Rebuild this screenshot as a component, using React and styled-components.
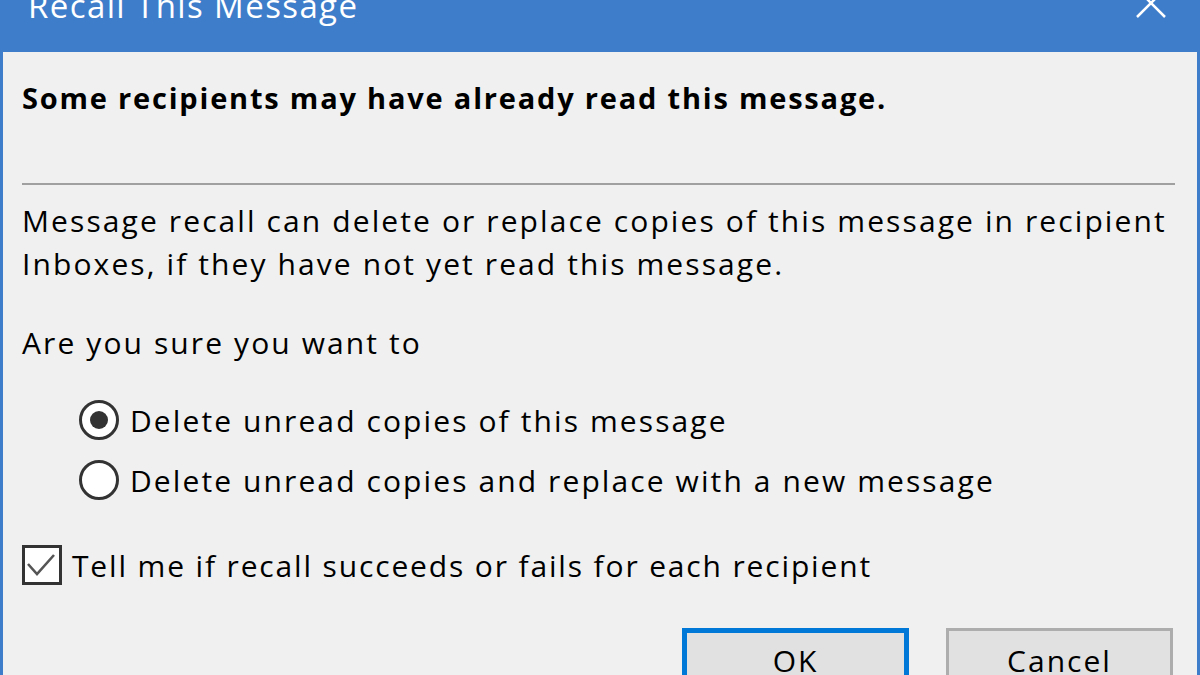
import React from 'react';
import styled, { createGlobalStyle } from 'styled-components';

const GlobalStyle = createGlobalStyle`
  html, body {
    margin: 0;
    padding: 0;
    background: #3d7dca;
  }
  body {
    font-family: "Open Sans", "Noto Sans", sans-serif;
  }
`;

const Frame = styled.div`
  width: 1200px;
  height: 675px;
  overflow: hidden;
  display: flex;
  flex-direction: column;
  background: #3d7dca;
`;

const TitleBar = styled.div`
  height: 52px;
  flex: none;
  display: flex;
  align-items: flex-start;
  justify-content: space-between;
  padding: 0 34px 0 28px;
`;

const TitleText = styled.div`
  margin-top: -16px;
  font-size: 33px;
  line-height: 44px;
  letter-spacing: 1.4px;
  color: #ffffff;
`;

const CloseIcon = styled.svg`
  margin-top: -12px;
  width: 30px;
  height: 30px;
`;

const Body = styled.div`
  flex: 1;
  margin: 0 3px 0 3px;
  background: #f0f0f0;
  padding: 0 22px 0 19px;
  display: flex;
  flex-direction: column;
  color: #000;
  font-size: 30px;
  line-height: 43px;
  letter-spacing: 2.1px;
`;

const Warning = styled.div`
  margin-top: 24px;
  font-weight: 700;
  font-size: 29px;
  letter-spacing: 1.8px;
`;

const Separator = styled.hr`
  margin: 64px 0 14px;
  border: none;
  border-top: 2px solid #a0a0a0;
  height: 0;
`;

const Paragraph = styled.p`
  margin: ${p => p.$gap || 0}px 0 0;
`;

const OptionList = styled.div`
  display: flex;
  flex-direction: column;
  margin: 26px 0 0 57px;
`;

const OptionRow = styled.label`
  height: 60px;
  display: flex;
  align-items: center;
  gap: ${p => p.$spacing || 11}px;
  margin-top: ${p => p.$gap || 0}px;
  letter-spacing: ${p => (p.$tight ? '1.85px' : 'inherit')};
`;

const Radio = styled.span`
  width: 40px;
  height: 40px;
  box-sizing: border-box;
  border-radius: 50%;
  border: 3px solid #333;
  background: #fff;
  display: flex;
  align-items: center;
  justify-content: center;
  flex: none;

  &::after {
    content: '';
    width: 18px;
    height: 18px;
    border-radius: 50%;
    background: #333;
    display: ${p => (p.$checked ? 'block' : 'none')};
  }
`;

const CheckBox = styled.span`
  width: 40px;
  height: 40px;
  box-sizing: border-box;
  border: 3px solid #333;
  background: #fff;
  display: flex;
  flex: none;
`;

const ButtonRow = styled.div`
  display: flex;
  justify-content: flex-end;
  gap: 37px;
  margin-top: 33px;
  padding-right: 2px;
`;

const Button = styled.button`
  width: 227px;
  height: 64px;
  flex: none;
  box-sizing: border-box;
  background: #e1e1e1;
  border: ${p => (p.$default ? '5px solid #0078d7' : '3px solid #adadad')};
  font-family: inherit;
  font-size: 30px;
  letter-spacing: 2px;
  color: #000;
  padding: 0;
`;

export default function App() {
  return (
    <Frame>
      <GlobalStyle />
      <TitleBar>
        <TitleText>Recall This Message</TitleText>
        <CloseIcon viewBox="0 0 30 30">
          <path d="M1 1 L29 29 M29 1 L1 29" stroke="#fff" strokeWidth="2.5" fill="none" />
        </CloseIcon>
      </TitleBar>
      <Body>
        <Warning>Some recipients may have already read this message.</Warning>
        <Separator />
        <Paragraph>
          Message recall can delete or replace copies of this message in recipient
          <br />
          Inboxes, if they have not yet read this message.
        </Paragraph>
        <Paragraph $gap={36}>Are you sure you want to</Paragraph>
        <OptionList>
          <OptionRow>
            <Radio $checked />
            Delete unread copies of this message
          </OptionRow>
          <OptionRow>
            <Radio />
            Delete unread copies and replace with a new message
          </OptionRow>
        </OptionList>
        <OptionRow $gap={25} $spacing={10} $tight>
          <CheckBox>
            <svg width="34" height="34" viewBox="0 0 34 34">
              <path d="M3 16 L12 26 L29 7" stroke="#555" strokeWidth="2.6" fill="none" />
            </svg>
          </CheckBox>
          Tell me if recall succeeds or fails for each recipient
        </OptionRow>
        <ButtonRow>
          <Button $default>OK</Button>
          <Button>Cancel</Button>
        </ButtonRow>
      </Body>
    </Frame>
  );
}
